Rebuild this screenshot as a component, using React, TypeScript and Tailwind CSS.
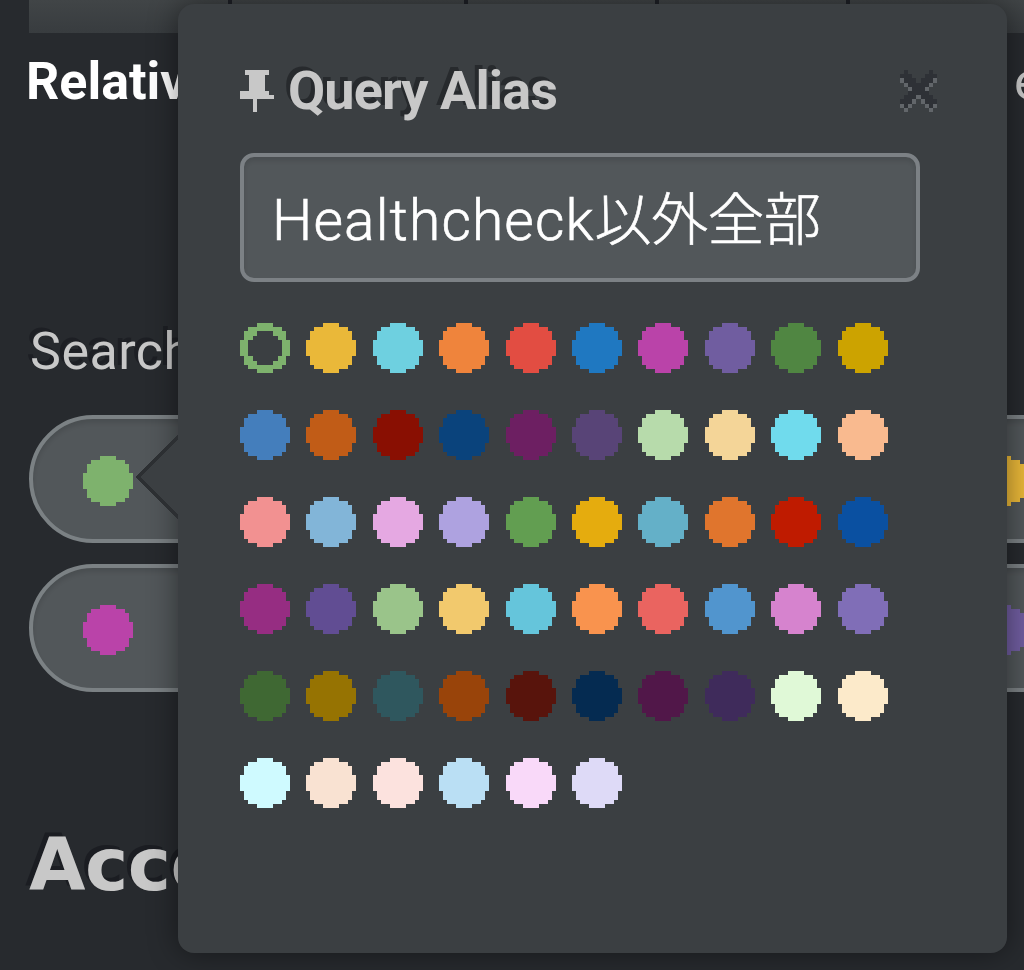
const DISC = 'M4 0H8V1H10V2H11V4H12V8H11V10H10V11H8V12H4V11H2V10H1V8H0V4H1V2H2V1H4Z';
const HOLE = 'M4 2H8V3H9V4H10V8H9V9H8V10H4V9H3V8H2V4H3V3H4Z';

const COLORS = [
  '#7eb26d', '#eab839', '#6ed0e0', '#ef843c', '#e24d42', '#1f78c1', '#ba43a9', '#705da0', '#508642', '#cca300',
  '#447ebc', '#c15c17', '#890f02', '#0a437c', '#6d1f62', '#584477', '#b7dbab', '#f4d598', '#70dbed', '#f9ba8f',
  '#f29191', '#82b5d8', '#e5a8e2', '#aea2e0', '#629e51', '#e5ac0e', '#64b0c8', '#e0752d', '#bf1b00', '#0a50a1',
  '#962d82', '#614d93', '#9ac48a', '#f2c96d', '#65c5db', '#f9934e', '#ea6460', '#5195ce', '#d683ce', '#806eb7',
  '#3f6833', '#967302', '#2f575e', '#99440a', '#58140c', '#052b51', '#511749', '#3f2b5b', '#e0f9d7', '#fceaca',
  '#cffaff', '#f9e2d2', '#fce2de', '#badff4', '#f9d9f9', '#dedaf7',
];

function Dot({ color, ring = false }: { color: string; ring?: boolean }) {
  return (
    <svg viewBox="0 0 12 12" className="block h-[50px] w-[50px] shrink-0" shapeRendering="crispEdges">
      <path d={ring ? DISC + HOLE : DISC} fill={color} fillRule="evenodd" />
    </svg>
  );
}

function Pin() {
  return (
    <svg viewBox="60 90 102 126" className="h-[42px] w-[34px] shrink-0" shapeRendering="crispEdges">
      <path d="M75 90H147V105H135V153H147V165H162V177H111V216H99V177H60V153H87V105H75Z" fill="#c8c8c8" />
    </svg>
  );
}

const CROSS = ['.d.....d.', 'ddd...ddd', 'lddd.dddl', '.ldddddl.', '..ldddl..', '..ddddd..', '.dddlddd.', 'dddl.lddd', 'ldl...ldl', '.l.....l.'];

function Close() {
  return (
    <svg viewBox="0 0 9 10" preserveAspectRatio="none" className="h-[42px] w-[37px]" shapeRendering="crispEdges">
      {CROSS.flatMap((row, y) =>
        [...row].map((c, x) =>
          c === '.' ? null : <rect key={`${x}-${y}`} x={x} y={y} width="1" height="1" fill={c === 'd' ? '#2e3136' : '#62666a'} />,
        ),
      )}
    </svg>
  );
}

function Pill({ color }: { color: string }) {
  return (
    <div className="flex h-32 w-[860px] shrink-0 items-center rounded-full border-4 border-[#7b8184] bg-[#52575a] pt-[3px] pl-[50px] shadow-[inset_0_4px_4px_rgba(0,0,0,0.1)]">
      <Dot color={color} />
    </div>
  );
}

export default function App() {
  return (
    <div className="relative h-[970px] w-[1024px] overflow-hidden bg-[#272a2e] font-['Roboto','Noto_Sans_CJK_JP',sans-serif] text-[#c8c8c8]">
      <div className="flex h-full flex-col pl-[29px]">
        <div className="flex h-[33px] shrink-0 bg-linear-to-b from-[#414547] to-[#383c3f]">
          <div className="w-[203px] shrink-0 border-r-4 border-[#1f2127]" />
          <div className="w-[236px] shrink-0 border-r-4 border-[#1f2127]" />
          <div className="w-[191px] shrink-0 border-r-4 border-[#1f2127]" />
          <div className="w-[191px] shrink-0 border-r-4 border-[#1f2127]" />
        </div>
        <div className="mt-[19px] flex h-[60px] shrink-0 items-center justify-between text-[52px] leading-[60px]">
          <b className="-ml-[3px] text-white">Relative</b>
          <span className="w-[10px]">e</span>
        </div>
        <div className="mt-[210px] h-[60px] shrink-0 pl-px text-[52px] leading-[60px] tracking-[0.5px] [text-shadow:-4px_-4px_0_#1d1f24]">Search</div>
        <div className="mt-[33px] flex shrink-0 gap-[35px]">
          <Pill color="#7eb26d" />
          <Pill color="#eab839" />
        </div>
        <div className="mt-[21px] flex shrink-0 gap-[35px]">
          <Pill color="#ba43a9" />
          <Pill color="#705da0" />
        </div>
        <div className="mt-[128px] h-[90px] shrink-0 font-['DejaVu_Sans',sans-serif] text-[73px] leading-[90px] font-bold tracking-[-0.5px] [text-shadow:-4px_-4px_0_#1b1d22]">Access</div>
      </div>

      <div className="absolute top-1 left-[178px] h-[949px] w-[829px] rounded-2xl bg-[#3b3f42] px-[62px] pt-[57px] shadow-[0_0_30px_rgba(0,0,0,0.45)]">
        <svg viewBox="0 0 42 90" className="absolute top-[428px] left-[-42px] h-[90px] w-[42px]" shapeRendering="crispEdges">
          <path d="M42 2L0 45L42 88Z" fill="#2c2f32" />
          <path d="M42 7L5 45L42 83Z" fill="#3b3f42" />
        </svg>
        <div className="flex h-[60px] items-center">
          <Pin />
          <h2 className="ml-[14px] text-[54px] leading-[60px] font-bold tracking-[-0.9px] [text-shadow:-4px_-4px_0_#272a2d]">Query Alias</h2>
          <button aria-label="Close" className="mr-[8px] ml-auto"><Close /></button>
        </div>
        <div className="mt-[32px] flex h-[129px] w-[680px] items-center rounded-[14px] border-4 border-[#7c8185] bg-[#52575a] pt-[5px] pl-[28px] text-[57px] leading-none font-light text-white shadow-[inset_0_4px_4px_rgba(0,0,0,0.1)]">
          <span className="whitespace-nowrap tracking-[1.1px] [-webkit-text-stroke:0.6px_white]">Healthcheck<span className="tracking-[-0.5px]">以外全部</span></span>
        </div>
        <div className="mt-[41px] grid grid-cols-[repeat(10,50px)] gap-x-[16.4px] gap-y-[37.1px]">
          {COLORS.map((color, i) => (
            <Dot key={color} color={color} ring={i === 0} />
          ))}
        </div>
      </div>
    </div>
  );
}
